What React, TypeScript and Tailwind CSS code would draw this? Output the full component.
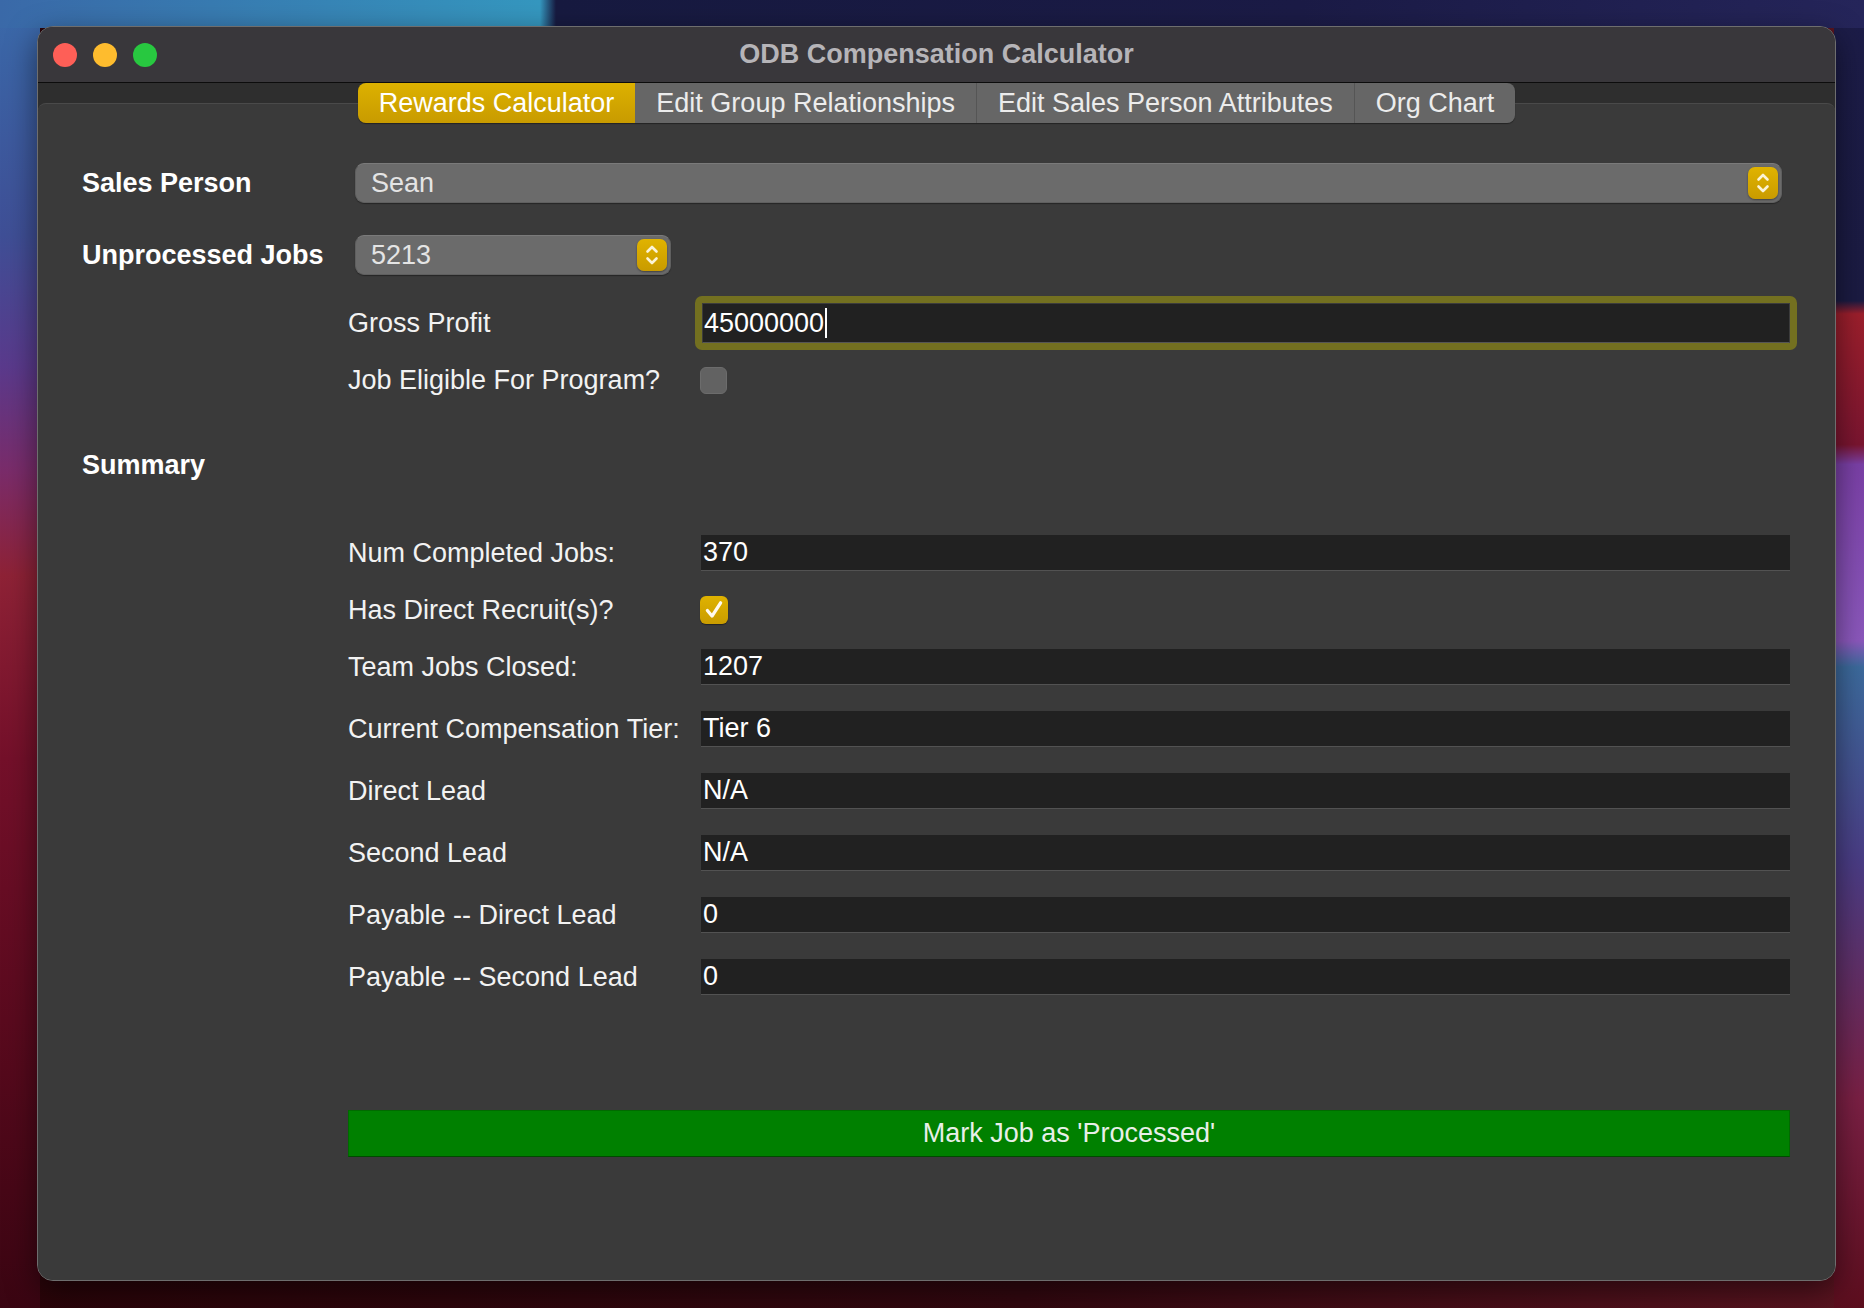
const tabs = [
  { label: "Rewards Calculator", active: true },
  { label: "Edit Group Relationships", active: false },
  { label: "Edit Sales Person Attributes", active: false },
  { label: "Org Chart", active: false },
];

const summary: { label: string; value?: string; check?: boolean }[] = [
  { label: "Num Completed Jobs:", value: "370" },
  { label: "Has Direct Recruit(s)?", check: true },
  { label: "Team Jobs Closed:", value: "1207" },
  { label: "Current Compensation Tier:", value: "Tier 6" },
  { label: "Direct Lead", value: "N/A" },
  { label: "Second Lead", value: "N/A" },
  { label: "Payable -- Direct Lead", value: "0" },
  { label: "Payable -- Second Lead", value: "0" },
];

function Stepper() {
  return (
    <div className="w-[30px] h-[32px] rounded-[7px] bg-[linear-gradient(180deg,#e0b300,#c99b00)] shadow-[0_1px_2px_rgba(0,0,0,0.4)] flex items-center justify-center">
      <svg width="30" height="32" viewBox="0 0 30 32" fill="none" stroke="#fbf3d6" strokeWidth="2.6" strokeLinecap="round" strokeLinejoin="round">
        <path d="M10.5 12.5 L15 8 L19.5 12.5" />
        <path d="M10.5 19.5 L15 24 L19.5 19.5" />
      </svg>
    </div>
  );
}

function Combo({ value, className }: { value: string; className: string }) {
  return (
    <div
      className={
        "h-[40px] rounded-[9px] bg-[#6b6b6b] border border-[#5f5f5f] border-t-[#7a7a7a] shadow-[0_1px_1px_rgba(0,0,0,0.35)] flex items-center justify-between pl-[15px] pr-[3px] " +
        className
      }
    >
      <span className="text-[27px] text-[#e4e4e4]">{value}</span>
      <Stepper />
    </div>
  );
}

export default function App() {
  return (
    <div
      className="w-[1864px] h-[1308px] overflow-hidden pt-[26px] pl-[37px] font-['Liberation_Sans',Arial,sans-serif] [background:linear-gradient(90deg,#3a69a8_0px,#3597bf_540px,#171a40_556px,#1b1b46_1300px,#25255a_1864px)_top_left/100%_28px_no-repeat,linear-gradient(180deg,#3a6aaa_0%,#3f4f96_18%,#5a3a8c_28%,#7a2c6a_36%,#8e2236_44%,#74102a_58%,#5a0a1e_78%,#3a0512_100%)_top_left/40px_100%_no-repeat,linear-gradient(180deg,#1c1c48_0%,#1b1b42_23%,#9c1f2c_24%,#7a1530_34%,#7a40a6_35.5%,#8b58bc_49%,#3c6a9c_51%,#4a3c84_66%,#7a2044_84%,#5c0e1e_100%)_top_right/30px_100%_no-repeat,linear-gradient(90deg,#2a0409,#330810_55%,#5a1420)]"
    >
      <div className="w-[1799px] h-[1255px] rounded-[16px] border border-[#6e6e6e] bg-[#2e2e2e] overflow-hidden flex flex-col shadow-[0_10px_30px_rgba(0,0,0,0.5)]">
        {/* title bar */}
        <div className="h-[56px] shrink-0 bg-[#39373b] border-b border-[#0c0c0c] flex items-center relative">
          <div className="flex gap-[16px] pl-[15px]">
            <div className="w-[24px] h-[24px] rounded-full bg-[#fe5f57]" />
            <div className="w-[24px] h-[24px] rounded-full bg-[#febc2e]" />
            <div className="w-[24px] h-[24px] rounded-full bg-[#28c840]" />
          </div>
          <div className="absolute inset-0 flex items-center justify-center text-[27px] font-bold text-[#b6b4b8] pointer-events-none">
            ODB Compensation Calculator
          </div>
        </div>

        {/* tabs */}
        <div className="h-[40px] -mb-[20px] relative z-10 flex justify-center">
          <div className="flex rounded-[8px] overflow-hidden shadow-[0_1px_1px_rgba(0,0,0,0.4)]">
            {tabs.map((t, i) => (
              <div
                key={t.label}
                className={
                  "h-[40px] flex items-center px-[21px] text-[27px] " +
                  (t.active
                    ? "bg-[linear-gradient(180deg,#dcb100,#c89b00)] text-white"
                    : "bg-[#666666] text-[#ececec]") +
                  (i > 1 ? " border-l border-[#555555]" : "")
                }
              >
                {t.label}
              </div>
            ))}
          </div>
        </div>

        {/* pane */}
        <div className="flex-1 bg-[#3a3a3a] border-t border-[#4a4a4a] rounded-t-[8px] pt-[59px] pl-[44px] pr-[45px] flex flex-col text-[27px] text-[#f2f2f2]">
          <div className="flex items-center h-[40px]">
            <div className="w-[273px] font-bold text-white">Sales Person</div>
            <Combo value="Sean" className="flex-1 mr-[8px]" />
          </div>

          <div className="flex items-center h-[40px] mt-[32px]">
            <div className="w-[273px] font-bold text-white">Unprocessed Jobs</div>
            <Combo value="5213" className="w-[316px]" />
          </div>

          <div className="ml-[266px] flex flex-col">
            <div className="flex items-center h-[54px] mt-[21px]">
              <div className="w-[347px]">Gross Profit</div>
              <div className="flex-1 -mr-[7px] h-[54px] rounded-[7px] bg-[#737020] p-[7px]">
                <div className="h-full bg-[#212121] border border-[#3c3c3c] border-b-[#555555] flex items-center pl-[1px] text-white">
                  45000000
                  <span className="w-[2px] h-[30px] bg-white ml-[1px]" />
                </div>
              </div>
            </div>

            <div className="flex items-center h-[27px] mt-[17px]">
              <div className="w-[352px]">Job Eligible For Program?</div>
              <div className="w-[27px] h-[27px] rounded-[6px] bg-[#626262] border border-[#6c6c6c]" />
            </div>
          </div>

          <div className="mt-[56px] leading-[30px] font-bold text-white">Summary</div>

          <div className="ml-[266px] mt-[55px] flex flex-col gap-[26px]">
            {summary.map((r) =>
              r.check ? (
                <div key={r.label} className="flex items-center h-[26px]">
                  <div className="w-[352px]">{r.label}</div>
                  <div className="w-[28px] h-[28px] rounded-[6px] bg-[linear-gradient(180deg,#dfb200,#c99c00)] flex items-center justify-center shadow-[0_1px_1px_rgba(0,0,0,0.4)]">
                    <svg width="22" height="22" viewBox="0 0 20 20" fill="none" stroke="#fffaf0" strokeWidth="3" strokeLinecap="round" strokeLinejoin="round">
                      <path d="M4 10.5 L8.2 15.5 L16 3.5" />
                    </svg>
                  </div>
                </div>
              ) : (
                <div key={r.label} className="flex items-center h-[36px]">
                  <div className="w-[353px]">{r.label}</div>
                  <div className="flex-1 h-[36px] bg-[#212121] border-b border-[#525252] flex items-center pl-[2px] text-white">
                    {r.value}
                  </div>
                </div>
              )
            )}
          </div>

          <div className="ml-[266px] mt-[115px] h-[47px] bg-[#008000] border border-[#006a00] border-b-[#004a00] flex items-center justify-center text-[#e8efe8]">
            Mark Job as 'Processed'
          </div>
        </div>
      </div>
    </div>
  );
}
